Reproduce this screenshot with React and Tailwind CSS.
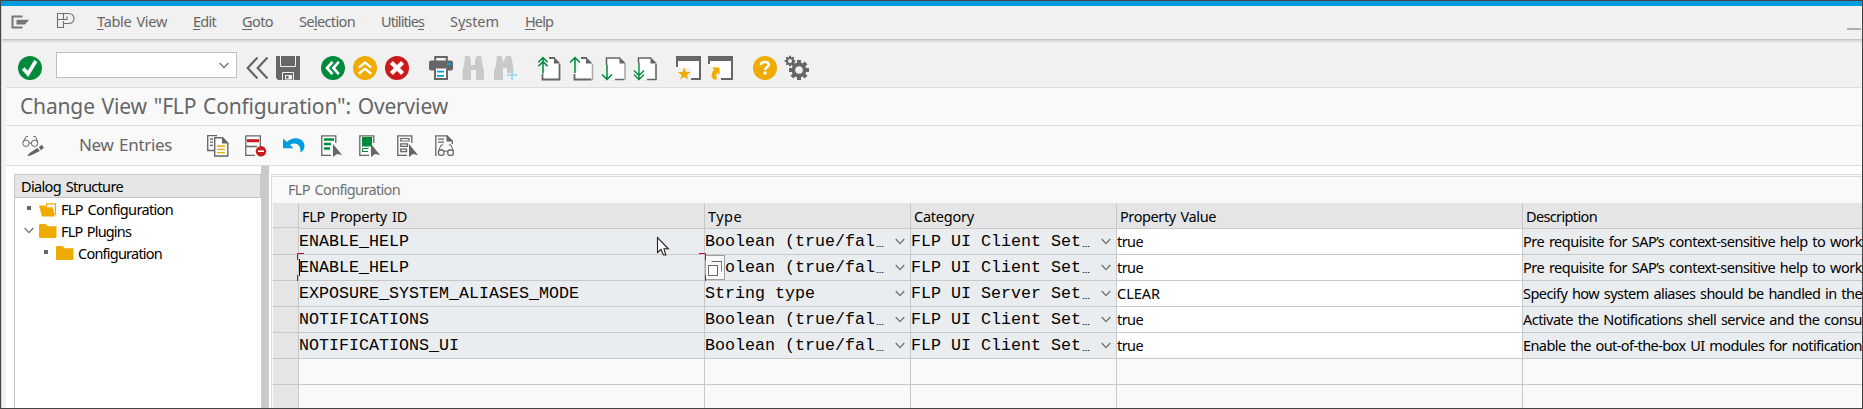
import { useLayoutEffect, useRef } from "react";

const G = "#666666";
const GREEN = "#008a3b";
const ORANGE = "#f0ab00";
const BLUE = "#009de0";
const RED = "#cc1919";

/* Single-line label whose tracking is adjusted to fill a given width. */
function Label({ w, className = "", children }) {
  const ref = useRef(null);
  useLayoutEffect(() => {
    const el = ref.current;
    el.style.letterSpacing = "0px";
    const n = el.textContent.length;
    const natural = el.getBoundingClientRect().width;
    el.style.letterSpacing = (w - natural) / n + "px";
  }, [w]);
  return (
    <span className={"block shrink-0 whitespace-pre [word-spacing:1.5px] " + className} style={{ width: w }}>
      <span ref={ref} className="inline-block">{children}</span>
    </span>
  );
}

function Icon({ w = 24, h = 24, className = "", children }) {
  return (
    <svg width={w} height={h} viewBox={`0 0 ${w} ${h}`} fill="none" className={"shrink-0 overflow-visible " + className}>
      {children}
    </svg>
  );
}

const U = ({ children }) => <span className="underline decoration-1 underline-offset-2">{children}</span>;

const Chevron = ({ className = "" }) => (
  <Icon w={10} h={7} className={className}>
    <path d="M.7 1 5 5.6 9.3 1" stroke="#707070" strokeWidth="1.3" />
  </Icon>
);

function MenuBar() {
  return (
    <div className="flex h-[33px] shrink-0 items-start bg-[#f1f1f1] text-[14.5px] leading-[20px] text-[#666]">
      <Icon w={19} h={14} className="ml-[9px] mt-[9px]">
        <path d="M11.5 1.5H1.5v11H11.5" stroke="#777" strokeWidth="2" />
        <path d="M5.5 4.8H18.2L14 9.5H5.5Z" fill="#777" />
      </Icon>
      <Icon w={19} h={17} className="ml-[26px] mt-[6px]">
        <path d="M1.5 1.5H13a5 5 0 0 1 0 10H7.5V15.5H1.5ZM7.5 2V7.5H2M7.5 7.5H11V4.5M7.5 11.5V9" stroke="#707070" strokeWidth="1.1" />
      </Icon>
      <div className="ml-[22px] mt-[5px] flex gap-[26px]">
        <Label w={70}><U>T</U>able View</Label>
        <Label w={23}><U>E</U>dit</Label>
        <Label w={31}><U>G</U>oto</Label>
        <Label w={56}>Se<U>l</U>ection</Label>
        <Label w={43}>Utilitie<U>s</U></Label>
        <Label w={49}>S<U>y</U>stem</Label>
        <Label w={28}><U>H</U>elp</Label>
      </div>
      <div className="ml-auto mt-[22px] h-[2px] w-[14px] shrink-0 mr-px bg-[#b0b0b0]" />
    </div>
  );
}

function Disc({ color, children, className }) {
  return (
    <Icon className={className}>
      <circle cx="12" cy="12" r="12" fill={color} />
      {children}
    </Icon>
  );
}

const Gear = ({ x, y, r, t }) => (
  <g transform={`translate(${x} ${y})`}>
    {[0, 45, 90, 135].map((a) => (
      <rect key={a} x={-t / 2} y={-r} width={t} height={r * 2} fill={G} transform={`rotate(${a})`} />
    ))}
    <circle r={r * 0.74} fill={G} />
    <circle r={r * 0.38} fill="#f1f1f1" />
  </g>
);

function Toolbar() {
  return (
    <div className="flex h-[44px] shrink-0 items-start bg-[#f1f1f1] pl-[16px] pt-[13px]">
      <Disc color={GREEN}>
        <path d="M5.3 12.5 10 18 17.8 5" stroke="#fff" strokeWidth="3.6" />
      </Disc>
      <div className="-mt-[4px] ml-[14px] flex h-[26px] w-[181px] shrink-0 justify-end border border-[#bfbfbf] bg-white pr-[7px] pt-[9px]">
        <Chevron />
      </div>
      <Icon className="ml-[9px]">
        <path d="M11.5 1.5 1.7 12 11.5 22.5M21.5 1.5 11.7 12 21.5 22.5" stroke={G} strokeWidth="2.2" />
      </Icon>
      <Icon className="ml-[6px]">
        <path d="M0 0H24V24H2L0 22Z" fill={G} />
        <path d="M4.5 0V10.5H19.5V0" stroke="#f1f1f1" strokeWidth="1" />
        <path d="M6.5 24V16.5H17.5V24" stroke="#f1f1f1" strokeWidth="1" />
        <rect x="9.5" y="19.5" width="6" height="3.5" fill={G} stroke="#f1f1f1" />
        <path d="M12.5 20h3v3h-3z" fill="#f1f1f1" />
      </Icon>
      <Disc color={GREEN} className="ml-[21px]">
        <path d="M11.5 5.8 6 12 11.5 18.2M17.8 5.8 12.3 12 17.8 18.2" stroke="#fff" strokeWidth="2.7" />
      </Disc>
      <Disc color={ORANGE} className="ml-[8px]">
        <path d="M5.8 11.6 12 6.6 18.2 11.6M5.8 17.8 12 12.8 18.2 17.8" stroke="#fff" strokeWidth="2.4" />
      </Disc>
      <Disc color={RED} className="ml-[8px]">
        <path d="M6.4 6.4 17.6 17.6M17.6 6.4 6.4 17.6" stroke="#fff" strokeWidth="4.2" />
      </Disc>
      <Icon className="ml-[20px]">
        <path d="M6.2 5V1H17.8V5" stroke={G} strokeWidth="2" />
        <rect y="4.5" width="24" height="10" rx="2" fill={G} />
        <rect x="18" y="7" width="4" height="2" fill={BLUE} />
        <path d="M6 12.5V23H18V12.5" fill="#fff" stroke={G} strokeWidth="2" />
        <path d="M8 15.7H15M8 19.8H15" stroke={BLUE} strokeWidth="1.8" />
      </Icon>
      <Icon className="ml-[8px]">
        <path d="M4 0H8.5L10 4.5V9H14V4.5L15.5 0H20L21.5 9 23 15V24H15V14H10V24H1.5V15L3 9Z" fill="#c9c9c9" />
      </Icon>
      <Icon className="ml-[8px]">
        <path d="M4 0H8.5L10.5 6 13 0H18L19.5 7 20.5 13V17H14V12H10V24H1V15L3 9Z" fill="#c9c9c9" />
        <path d="M14 18H24V20H14ZM18 14H20V24H18Z" fill="#9fd9f6" />
      </Icon>
      <Icon className="ml-[20px]">
        <path d="M14 2H18L23 7V24H6V17L10 14V4Z" fill="#fff" />
        <path d="M12 2H18M5.5 18V23.5H22.5V8" stroke={G} strokeWidth="1.8" />
        <path d="M17 1 23.5 7.5H17Z" fill={G} />
        <path d="M6 17.5V2M1.3 6.2 6 1.6 10.7 6.2M1.3 10.2 6 5.6 10.7 10.2" stroke={GREEN} strokeWidth="1.5" />
      </Icon>
      <Icon className="ml-[8px]">
        <path d="M14 2H18L23 7V24H6V17L10 14V4Z" fill="#fff" />
        <path d="M12 2H18M5.5 18V23.5H22.5" stroke={G} strokeWidth="1.8" />
        <path d="M23.5 24V8" stroke="#aaa" strokeWidth="1.6" />
        <path d="M17 1 23.5 7.5H17Z" fill={G} />
        <path d="M6 17V2M1 6.5 6 1.6 11 6.5" stroke={GREEN} strokeWidth="1.5" />
      </Icon>
      <Icon className="ml-[8px]">
        <path d="M6 2H19L24 7V24H12L6 17Z" fill="#fff" />
        <path d="M5.5 9V2H19M14 23.5H23.5" stroke={G} strokeWidth="1.6" />
        <path d="M24 24V8" stroke="#aaa" strokeWidth="1.6" />
        <path d="M18.5 1 25 7.5H18.5Z" fill={G} />
        <path d="M6 9V23M1 18.5 6 23.4 11 18.5" stroke={GREEN} strokeWidth="1.5" />
      </Icon>
      <Icon className="ml-[8px]">
        <path d="M6 2H18L23 7V24H12L6 17Z" fill="#fff" />
        <path d="M5.5 7V2H18M14 23.5H23V8" stroke={G} strokeWidth="1.6" />
        <path d="M17.5 1 24 7.5H17.5Z" fill={G} />
        <path d="M6 7V22.5M1 14.5 6 19.4 11 14.5M1 18.5 6 23.4 11 18.5" stroke={GREEN} strokeWidth="1.4" />
      </Icon>
      <Icon className="ml-[19px]">
        <path d="M1 3H24V23H1Z" fill="#fff" />
        <path d="M0 12H15V24H0Z" fill="#f1f1f1" />
        <path d="M0 11V0H25V24H15V22H23V5H2V11Z" fill={G} />
        <path d="M8.2 11.2 9.9 16H14.6L10.8 18.9 12.2 23.6 8.2 20.8 4.3 23.6 5.6 18.9 1.8 16H6.5Z" fill={ORANGE} />
      </Icon>
      <Icon className="ml-[8px]">
        <path d="M1 3H24V23H1Z" fill="#fff" />
        <path d="M0 11H11V24H0Z" fill="#f1f1f1" />
        <path d="M0 8V0H25V24H13V22H23V5H2V8Z" fill={G} />
        <path d="M4 11.5H11.5V19L9.3 16.8Q7 19.5 9.3 22.8L6 23.8Q0.8 19 6.2 13.8Z" fill={ORANGE} />
      </Icon>
      <Disc color={ORANGE} className="ml-[21px]">
        <path d="M7.9 9.2Q7.9 6 12 6 15.8 6 15.8 8.8 15.8 10.2 13.8 11.3 12.1 12.3 12.1 14" stroke="#fff" strokeWidth="2.6" />
        <rect x="10.6" y="15.5" width="3" height="3" fill="#fff" />
      </Disc>
      <Icon className="ml-[8px]">
        <Gear x={5} y={5} r={5.3} t={2} />
        <Gear x={14} y={14} r={10} t={4} />
      </Icon>
    </div>
  );
}

const Pointer = () => <path d="M12 9 21 20 16 19 12 22Z" fill={G} />;

function AppToolbar() {
  return (
    <div className="flex h-[39px] shrink-0 items-start bg-[#f9f9f9] pl-[16px] pt-[9px]">
      <Icon w={22} h={22}>
        <circle cx="4" cy="8.3" r="3.2" stroke={G} />
        <circle cx="12.6" cy="8.3" r="3.2" stroke={G} />
        <path d="M7 8H9.6M1 7 4.2 1.5H6M15.8 7 13.5 1.5H11.5" stroke={G} />
        <path d="M7 18.5 15.5 12.8 17.8 16 9.3 20.3 5.3 21.3ZM16.8 12.2 19.8 9.8 22 12.8 18.9 15.2Z" fill={G} />
      </Icon>
      <Label w={93} className="ml-[35px] text-[17px] leading-[20px] text-[#666]">New Entries</Label>
      <Icon w={22} h={22} className="ml-[35px]">
        <path d="M8 15.5H.7V.7H10M3 4H6M3 7.2H6M3 10.4H6" stroke={G} strokeWidth="1.3" />
        <path d="M7.7 2.7H15.5L20.8 8V21H7.7Z" fill="#fff" stroke={G} strokeWidth="1.4" />
        <path d="M15 2V8.5H21.5Z" fill={G} />
        <path d="M10 11H18M10 14.3H18M10 17.6H18" stroke={ORANGE} strokeWidth="1.3" />
      </Icon>
      <Icon w={22} h={22} className="ml-[16px]">
        <path d="M.8.8H15.3V11M.8.8V20.3H10M1 11.5H12" stroke={G} strokeWidth="1.3" />
        <rect x="2" y="4.2" width="12" height="3" fill={RED} />
        <circle cx="16" cy="16.2" r="5.2" fill={RED} />
        <path d="M13 16.2H19" stroke="#fff" strokeWidth="1.6" />
      </Icon>
      <Icon w={23} h={22} className="ml-[16px]">
        <path d="M0 3.5V13.2H10.5L7 10Q10.5 7.5 14.5 9.3 18 11.5 17.3 17.5 21.5 15.5 21.5 11 21 4 13.5 3.3 8 3 4 7Z" fill={BLUE} />
      </Icon>
      <Icon w={22} h={22} className="ml-[15px]">
        <path d="M14.8 8V.8H.8V20.3H10" stroke={G} strokeWidth="1.3" />
        <path d="M3 4.5H13M3 9H10M3 13.5H9" stroke={GREEN} strokeWidth="2.7" />
        <Pointer />
      </Icon>
      <Icon w={22} h={22} className="ml-[16px]">
        <path d="M14.8 8V.8H.8V20.3H10" stroke={G} strokeWidth="1.3" />
        <path d="M3 2H13V11.5H3Z" fill={GREEN} />
        <path d="M3.5 17V13.5H9.5M3.5 16.5H9" stroke={GREEN} strokeWidth="1" />
        <Pointer />
      </Icon>
      <Icon w={22} h={22} className="ml-[16px]">
        <path d="M14.8 8V.8H.8V20.3H10" stroke={G} strokeWidth="1.3" />
        <path d="M3.7 3.5H12V6H3.7ZM3.7 8.8H10.5V11.3H3.7ZM3.7 14.2H9.5V16.7H3.7Z" stroke={G} strokeWidth="1.2" />
        <Pointer />
      </Icon>
      <Icon w={22} h={22} className="ml-[16px]">
        <path d="M1.5 20.3H.8V.8H12L17.3 6V9M3 4.2H9M3 7.2H9" stroke={G} strokeWidth="1.3" />
        <path d="M11.5 0V6.5H18Z" fill={G} />
        <rect x="3.5" y="15" width="5.5" height="5.3" rx="2" stroke={G} strokeWidth="1.3" />
        <rect x="12.8" y="15" width="5.5" height="5.3" rx="2" stroke={G} strokeWidth="1.3" />
        <path d="M9 16.2H12.8M3.6 16 6 10H8.2M18.3 16 16 10H13.8" stroke={G} />
      </Icon>
    </div>
  );
}

const Folder = ({ open }) => (
  <Icon w={18} h={14}>
    {open ? (
      <>
        <path d="M7.5 4V.9H16.4V12" stroke={ORANGE} strokeWidth="1.2" />
        <path d="M0 2.5H5.5L7.5 4.2H13.8L16 13.5H3Z" fill={ORANGE} />
      </>
    ) : (
      <path d="M0 1.2Q0 0 1.2 0H6.5L9 2.3H17.5V12.8Q17.5 14 16.3 14H1.2Q0 14 0 12.8Z" fill={ORANGE} />
    )}
  </Icon>
);

function Tree() {
  return (
    <div className="flex w-[247px] shrink-0 flex-col border-l border-t border-[#c8c8c8] text-[14.5px] leading-[22px] text-black">
      <div className="h-[23px] shrink-0 border-b border-r border-[#c8c8c8] bg-[#e5e5e5] pl-[6px]">
        <Label w={102}>Dialog Structure</Label>
      </div>
      <div className="flex h-[22px] items-center pl-[12px]">
        <div className="mb-[3px] h-[4px] w-[4px] bg-[#666]" />
        <div className="ml-[8px] mt-px"><Folder open /></div>
        <Label w={112} className="ml-[4px]">FLP Configuration</Label>
      </div>
      <div className="flex h-[22px] items-center pl-[9px]">
        <Chevron className="mb-[2px]" />
        <div className="ml-[5px]"><Folder /></div>
        <Label w={70} className="ml-[4px]">FLP Plugins</Label>
      </div>
      <div className="flex h-[22px] items-center pl-[29px]">
        <div className="mb-[3px] h-[4px] w-[4px] bg-[#666]" />
        <div className="ml-[8px]"><Folder /></div>
        <Label w={84} className="ml-[4px]">Configuration</Label>
      </div>
    </div>
  );
}

const ROWS = [
  { id: "ENABLE_HELP", type: "Boolean (true/fal", cat: "FLP UI Client Set", value: "true", vw: 26, desc: "Pre requisite for SAP’s context-sensitive help to work", dw: 339 },
  { id: "ENABLE_HELP", type: "Boolean (true/fal", cat: "FLP UI Client Set", value: "true", vw: 26, desc: "Pre requisite for SAP’s context-sensitive help to work", dw: 339, focused: true },
  { id: "EXPOSURE_SYSTEM_ALIASES_MODE", type: "String type", full: true, cat: "FLP UI Server Set", value: "CLEAR", vw: 43, desc: "Specify how system aliases should be handled in the", dw: 339 },
  { id: "NOTIFICATIONS", type: "Boolean (true/fal", cat: "FLP UI Client Set", value: "true", vw: 26, desc: "Activate the Notifications shell service and the consu", dw: 339 },
  { id: "NOTIFICATIONS_UI", type: "Boolean (true/fal", cat: "FLP UI Client Set", value: "true", vw: 26, desc: "Enable the out-of-the-box UI modules for notification", dw: 339 },
];

const COLS = "grid grid-cols-[25px_406px_206px_206px_406px_340px]";
const CELL = "overflow-hidden border-b border-l border-[#c8c8c8]";
const MONO = "whitespace-pre font-['Liberation_Mono',monospace] text-[16.66px] leading-[25px]";

const Dropdown = ({ text, full }) => (
  <div className={`${CELL} flex items-start bg-[#e9edf0]`}>
    <span className={MONO}>{text}</span>
    {!full && <span className="ml-px font-['Liberation_Sans',sans-serif] text-[8px] font-bold leading-[31px]">…</span>}
    <Chevron className="ml-auto mr-[5px] mt-[9px]" />
  </div>
);

function Grid() {
  return (
    <div className="flex grow flex-col overflow-hidden border-l border-t border-[#dcdcdc] bg-[#f9f9f9] pl-px">
      <div className="mt-px h-[27px] shrink-0 border-t border-[#dcdcdc] pl-[15px] pt-px text-[14.5px] leading-[22px] text-[#707070]">
        <Label w={112}>FLP Configuration</Label>
      </div>
      <div className={`${COLS} h-[26px] shrink-0 bg-[#e5e5e5] text-[14.5px] leading-[22px] text-black`}>
        <div className="mb-px border-b border-[#c8c8c8]" />
        <div className={`${CELL} pl-[3px] pt-[2px]`}><Label w={105}>FLP Property ID</Label></div>
        <div className={`${CELL} pl-[3px] pt-[2px]`}><Label w={34}>Type</Label></div>
        <div className={`${CELL} pl-[3px] pt-[2px]`}><Label w={60}>Category</Label></div>
        <div className={`${CELL} pl-[3px] pt-[2px]`}><Label w={96}>Property Value</Label></div>
        <div className={`${CELL} pl-[3px] pt-[2px]`}><Label w={71}>Description</Label></div>
      </div>
      {ROWS.map((r, i) => (
        <div key={i} className={`${COLS} relative h-[26px] shrink-0 text-[14.5px] leading-[24px] text-black`}>
          <div className="border-b border-[#c8c8c8] bg-[#e5e5e5]" />
          <div className={`${CELL} bg-[#e9edf0]`}><span className={`block ${MONO}`}>{r.id}</span></div>
          <Dropdown text={r.type} full={r.full} />
          <Dropdown text={r.cat} />
          <div className={`${CELL} bg-white`}><Label w={r.vw}>{r.value}</Label></div>
          <div className={`${CELL} bg-[#e9edf0]`}><Label w={r.dw}>{r.desc}</Label></div>
          {r.focused && (
            <>
              <div className="absolute left-[432px] top-0 flex h-[25px] w-[20px] items-center justify-center border border-[#a0a0a0] bg-[#f9f9f9]">
                <Icon w={16} h={16}>
                  <path d="M14.5 1V11.5" stroke="#b07060" />
                  <path d="M4.5 1.5H14.5" stroke={G} />
                  <rect x="1.5" y="5.5" width="9" height="10" fill="#fff" stroke={G} />
                </Icon>
              </div>
              <Icon w={409} h={29} className="absolute left-[24px] top-[-2px]">
                <path d="M7 .5H.5V7M.5 22V28.5H7M402 .5H408.5V7M408.5 22V28.5H402" stroke="#d2001e" />
                <path d="M2.5 6V23" stroke="#000" />
              </Icon>
            </>
          )}
        </div>
      ))}
      {[0, 1].map((i) => (
        <div key={i} className={`${COLS} h-[26px] shrink-0`}>
          <div className="border-b border-[#c8c8c8] bg-[#e5e5e5]" />
          <div className={CELL} />
          <div className={CELL} />
          <div className={CELL} />
          <div className={CELL} />
          <div className={CELL} />
        </div>
      ))}
    </div>
  );
}

export default function App() {
  return (
    <div className="relative flex h-[409px] w-[1863px] flex-col overflow-hidden border border-[#444] bg-[#f1f1f1] font-['Noto_Sans',sans-serif]">
      <div className="h-[5px] shrink-0 bg-[#009de0]" />
      <div className="flex min-h-0 grow flex-col border-l border-[#d4d4d4]">
        <MenuBar />
        <div className="h-px shrink-0 bg-[#c4c4c4]" />
        <div className="h-[2px] shrink-0 bg-[#dcdcdc]" />
        <div className="h-px shrink-0 bg-[#ececec]" />
        <Toolbar />
        <div className="ml-[4px] flex min-h-0 grow flex-col bg-[#f9f9f9]">
          <div className="h-[39px] shrink-0 border-b border-t border-[#dcdcdc] pl-[14px] pt-[4px] text-[21px] leading-[28px] text-[#666]">
            <Label w={428}>{'Change View "FLP Configuration": Overview'}</Label>
          </div>
          <AppToolbar />
          <div className="flex min-h-0 grow border-t border-[#dcdcdc] bg-white">
            <div className="flex pl-[8px] pt-[8px]"><Tree /></div>
            <div className="w-[8px] shrink-0 bg-[#c9c9c9]" />
            <div className="flex min-w-0 grow pl-[2px] pt-[8px]"><Grid /></div>
          </div>
        </div>
      </div>
      <svg width="14" height="20" viewBox="0 0 14 20" className="absolute left-[655px] top-[235px]">
        <path d="M1.5 1.5V16.5L5 13.5 7.5 19H9.8L8 12.8H12.3Z" fill="#fff" stroke="#222" strokeWidth="1.1" />
      </svg>
    </div>
  );
}
